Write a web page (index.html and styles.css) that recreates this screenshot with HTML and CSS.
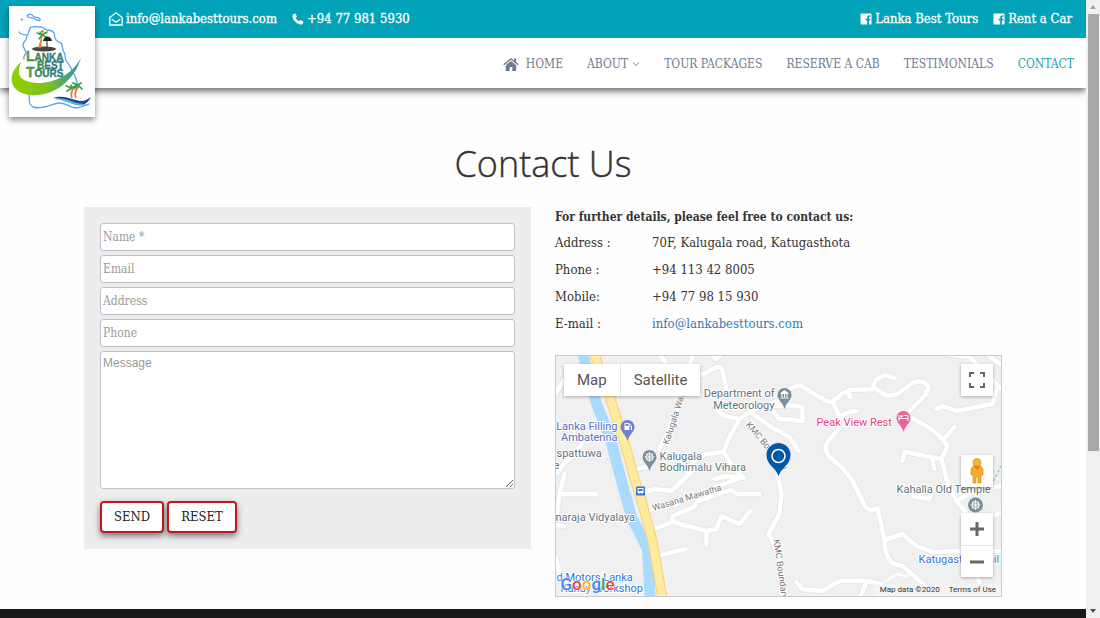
FILE: index.html
```html
<!DOCTYPE html>
<html lang="en">
<head>
<meta charset="utf-8">
<meta name="viewport" content="width=device-width, initial-scale=1">
<title>Contact Us - Lanka Best Tours</title>
<link rel="stylesheet" href="styles.css">
</head>
<body>
<div class="shell">
<div class="page">
  <header class="header">
    <div class="topbar">
      <div class="topbar-group">
        <a href="#"><svg class="icon" viewBox="0 0 14 14" fill="none" stroke="currentColor" stroke-width="1.3" stroke-linejoin="round"><path d="M.8 5.4 7 .8l6.200 4.600V13H.8zM2.800 7.200 7 10.200l4.200-3"/></svg>info@lankabesttours.com</a>
        <a href="#"><svg class="icon icon-phone" viewBox="0 0 12 12" fill="currentColor"><path d="M1.200 1.200 3.200.6 5 3.600 3.700 5c.6 1.300 1.700 2.500 3.100 3.200l1.500-1.300 3.100 1.700-.6 2.100c-.4.700-1.500.9-2.400.700C4.500 10.700 1.300 7.500.6 3.700c-.1-1 0-2 .6-2.500z"/></svg>+94 77 981 5930</a>
      </div>
      <div class="topbar-group">
        <a href="#"><svg class="icon icon-fb" viewBox="0 0 12 12" fill="currentColor"><path fill-rule="evenodd" d="M1 .5h10l.5.5v10l-.5.5H9V7.400h1.300l.2-1.700H9V4.600c0-.5.200-.8.800-.8h.7V2.200c-2.300-.3-3.300.5-3.300 2.100v1.400H5.700v1.700h1.500v4.100H1L.5 11V1z"/></svg>Lanka Best Tours</a>
        <a href="#"><svg class="icon icon-fb" viewBox="0 0 12 12" fill="currentColor"><path fill-rule="evenodd" d="M1 .5h10l.5.5v10l-.5.5H9V7.400h1.300l.2-1.700H9V4.600c0-.5.200-.8.800-.8h.7V2.200c-2.300-.3-3.300.5-3.300 2.100v1.400H5.700v1.700h1.500v4.100H1L.5 11V1z"/></svg>Rent a Car</a>
      </div>
    </div>
    <nav class="nav">
      <a href="#"><svg class="icon-home" viewBox="0 0 16 13" fill="currentColor"><path d="M8 0 .3 6.300l.9 1L8 1.800l6.800 5.500.9-1L13 4V.6h-2v1.800z"/><path d="M8 3 2.800 7.300V13h3.900V9h2.600v4h3.900V7.300z"/></svg>HOME</a>
      <a href="#">ABOUT<svg class="icon-caret" viewBox="0 0 8 6" fill="none" stroke="currentColor" stroke-width="1"><path d="M1 1.500 4 4.500 7 1.500"/></svg></a>
      <a href="#">TOUR PACKAGES</a>
      <a href="#">RESERVE A CAB</a>
      <a href="#">TESTIMONIALS</a>
      <a href="#" class="active">CONTACT</a>
    </nav>
    <a class="logo" href="#" aria-label="Lanka Best Tours">
      <svg viewBox="9 6 86 111" fill="none">
        <defs>
          <linearGradient id="swoosh"><stop offset="0" stop-color="#8fd000"/><stop offset=".5" stop-color="#7fc31c"/><stop offset="1" stop-color="#2b8fb0"/></linearGradient>
          <linearGradient id="word"><stop offset="0" stop-color="#3f8f3c"/><stop offset="1" stop-color="#1f7f95"/></linearGradient>
        </defs>
        <g stroke="#56a5f0" stroke-width="1.300" stroke-linecap="round" stroke-linejoin="round">
          <path d="M19 32c2 3 5 3 8 3 3-1 1-6 4-8 3-1 7 0 10 0s3 3 6 3 5 0 7 3c1 3 0 6 3 8s5 1 5 4c1 3 0 5 2 7 2 4 0 7 3 10s4 7 6 10 3 6 4 10 0 7-2 11M27 36c0 4-4 6-4 9s3 5 3 8c-1 3-3 3-2 6M29 92c1 4-1 8 1 12 3 5 9 4 14 3 6-1 10-4 16-4 7 0 10 5 16 5 5-1 7-1 13-4"/>
          <path d="M27 16c2-3 5-2 6 0s4 0 7 3c1 2-2 2-5 0s-6 0-8-3z"/>
          <path d="M21.500 19.500h.5" stroke-width="2"/>
        </g>
        <ellipse cx="44" cy="49" rx="12" ry="2.500" fill="#444"/>
        <path d="M41 48c-1-5 0-8 1-12M39 48l3-12" stroke="#ee7622" stroke-width="1.300"/>
        <path d="M42 35l-5-2M42 35l-3 4M42 35l5-3M42 35l4 2M42 35l-2-3" stroke="#2fa04e" stroke-width="1.500" stroke-linecap="round"/>
        <circle cx="42.500" cy="31.500" r="1.300" fill="#f05a28"/>
        <path d="M43 41c1-6 8-6 9 0z" fill="#222"/><path d="M47 39v9" stroke="#222"/>
        <path d="M21 62c-4 11-3 17 9 20 17 4 40-4 51-24-8 25-29 39-51 37-21-2-24-20-9-33z" fill="url(#swoosh)"/>
        <g class="logo-word">
          <text x="26" y="61"><tspan class="cap">L</tspan>ANKA</text>
          <text x="37" y="69">BEST</text>
          <text x="26" y="77"><tspan class="cap">T</tspan>OURS</text>
        </g>
        <path d="M72 98c-2-4 0-6 1-10M76 98c-2-5 0-8 3-12" stroke="#f07824" stroke-width="1.700"/>
        <path d="M72 88l-6-2M72 88l-5 3M72 88l5-3M72 88l-1-3M78 85l-5-2M78 85l3-2M78 85l4 4M78 85l-4 4" stroke="#2ca24c" stroke-width="1.700" stroke-linecap="round"/>
        <path d="M53 98c10-4 20 2 28 3 4 0 7-2 10-4-3 6-8 9-13 8-8-1-16-7-25-7z" fill="#21439b"/>
        <path d="M56 99c11-1 20 6 26 5M62 100c10 2 14 6 25 5" stroke="#52b6ed" stroke-width="1.300"/>
      </svg>
    </a>
  </header>

  <main class="main">
    <h1>Contact Us</h1>
    <div class="columns">
      <form class="form">
        <input type="text" aria-label="Name" placeholder="Name *">
        <input type="email" aria-label="Email" placeholder="Email">
        <input type="text" aria-label="Address" placeholder="Address">
        <input type="tel" aria-label="Phone" placeholder="Phone">
        <textarea aria-label="Message" placeholder="Message"></textarea>
        <div class="actions">
          <button type="submit">SEND</button>
          <button type="reset">RESET</button>
        </div>
      </form>
      <section class="info">
        <p class="lead">For further details, please feel free to contact us:</p>
        <dl class="details">
          <dt>Address :</dt><dd>70F, Kalugala road, Katugasthota</dd>
          <dt>Phone :</dt><dd>+94 113 42 8005</dd>
          <dt>Mobile:</dt><dd>+94 77 98 15 930</dd>
          <dt>E-mail :</dt><dd><a href="#">info@lankabesttours.com</a></dd>
        </dl>
        <div class="map">
          <svg class="map-canvas" viewBox="556 357 446 240" preserveAspectRatio="xMidYMid slice" role="img" aria-label="Map of Katugasthota">
            <defs>
              <path id="roads" d="M698 378 717 368Q722 367 723 371L727 390M716 410 725 417 740 420 752 412 785 399M740 420 729 440 724 453 706 455 694 463 686 478M724 453 735 470 741 476M752 414 770 427 790 438 799 452M660 450 675 417 683 397 693 356M660 356 666 363M707 350 716 360 722 356M565 380 557 393M557 475 565 464 575 455 583 444M637 470 652 467M715 480 727 477 745 479M785 392 800 386 827 402 833 403 842 395 850 391 877 390 888 397 898 395 913 384Q924 379 929 388L926 396 908 414M873 389 876 381 885 376 895 379M848 392 851 398M833 403 840 417 850 413 857 412M840 417 839 430 828 443Q824 450 830 458L842 468 852 480 866 508Q871 513 878 509L885 540 886 553 892 564 903 567 925 586M885 541 903 535 917 547 933 553 957 552 1002 552M912 419 927 427 940 437 948 447 942 460 947 480 957 502 970 518M944 440 955 428M942 460 905 453 903 462M932 458 935 470M937 410 943 407 957 412 993 405 998 388M947 355 970 358 980 368 1002 390M987 355 1003 367M770 408 780 420 803 422 803 408 792 406 770 407M778 475 782 495 780 515 769 535 773 542 780 560 782 597M797 583 803 590 822 592 840 582 867 582 882 585M866 585 861 597M913 497 930 500 932 495M957 502 975 492 1002 487M993 518 1002 513M977 575 982 590M560 495 596 495M565 475 560 495 557 520M556 526 565 527M556 558 562 582M645 493 655 490 672 492 694 471M650 511 744 478M653 531 673 523 673 517 695 508 697 503 731 491 738 495 760 495M673 523 707 532 717 530 722 517 740 525 751 512M707 532 707 546M658 557 686 550"/>
              <path id="pin" d="M0 14C-2 7-7 5-7 0a7 7 0 0 1 14 0C7 5 2 7 0 14z"/>
            </defs>
            <path fill="#f1f0f0" d="M500 300h600v400H500z"/>
            <g fill="none" stroke-linejoin="round" stroke-linecap="round">
              <path d="M582 350 597 405 611 440 621 478 632 518 648 550 651 605" stroke="#aadaff" stroke-width="11"/>
              <use href="#roads" stroke="#e3e4e8" stroke-width="6"/>
              <use href="#roads" stroke="#fff" stroke-width="4.500"/>
              <path d="M882 585 898 575 907 578 913 574" stroke="#fff" stroke-width="2"/>
              <path d="M593 350 610 397 626 447 635 480 643 505 653 542 664 605" stroke="#f8d16c" stroke-width="10"/>
              <path d="M593 350 610 397 626 447 635 480 643 505 653 542 664 605" stroke="#ffeb9f" stroke-width="8"/>
              <path d="M994 482 1002 466" stroke="#6ab58d" stroke-dasharray="2 3"/>
            </g>
            <g class="map-text">
              <g class="place">
                <text x="775" y="398" text-anchor="end">Department of</text><text x="775" y="410" text-anchor="end">Meteorology</text>
                <text x="660" y="461">Kalugala</text><text x="660" y="472">Bodhimalu Vihara</text>
                <text x="557" y="458">spattuwa</text><text x="554" y="470">e</text>
                <text x="556" y="522">naraja Vidyalaya</text><text x="897" y="494">Kahalla Old Temple</text>
              </g>
              <g class="shop"><text x="618" y="431" text-anchor="end">Lanka Filling</text><text x="618" y="442" text-anchor="end">Ambatenna</text></g>
              <text class="hotel" x="817" y="427">Peak View Rest</text>
              <g class="transit"><text x="557" y="582">d Motors Lanka</text><text x="561" y="593">Kandy Workshop</text><text x="919" y="564">Katugastota Rail</text></g>
              <g class="street">
                <text transform="translate(669 446) rotate(-72)">Kalugala Watta</text>
                <text transform="translate(746 426) rotate(50)">KMC Boundary</text>
                <text transform="translate(654 512) rotate(-17)">Wasana Mawatha</text>
                <text transform="translate(774 541) rotate(82)">KMC Boundary Rd</text>
              </g>
            </g>
            <g transform="translate(785 396)"><use href="#pin" fill="#78909c"/><path fill="#fff" d="M-4-2 0-5l4 3v1h-8zM-3-1h1v3h-1zM-.5-1h1v3h-1zM2-1h1v3H2zM-4 2.500h8v1h-8z"/></g>
            <g transform="translate(650 458)"><use href="#pin" fill="#78909c"/><g fill="none" stroke="#fff"><circle r="3.500"/><path d="M-5 0H5M0-5V5M-3.500-3.500l7 7M3.500-3.500l-7 7" stroke-width=".8"/></g></g>
            <g transform="translate(628 428)"><use href="#pin" fill="#7080cf"/><path fill="#fff" fill-rule="evenodd" d="M-3-4h5V3h-5zM-2-3v2h3v-2z"/><path d="M2-3l2 2v4" stroke="#fff" fill="none"/></g>
            <g transform="translate(904 419)"><use href="#pin" fill="#ee6196"/><path fill="#fff" d="M-5-3h1v3H4V-2H0v-1h4l1 1v5H4V1h-8v2h-1z"/><circle cx="-2" cy="-1.700" r="1.200" fill="#fff"/></g>
            <g transform="translate(976 506)"><circle r="7.500" fill="#78909c"/><g fill="none" stroke="#fff"><circle r="3.500"/><path d="M-5 0H5M0-5V5M-3.500-3.500l7 7M3.500-3.500l-7 7" stroke-width=".8"/></g></g>
            <g transform="translate(641 492)"><rect x="-4.500" y="-4.500" width="9" height="9" rx="1" fill="#3173e4"/><path fill="#fff" fill-rule="evenodd" d="M-3-3h6v5H2v1H1V2h-2v1h-1V2h-1zM-2-2v2h4v-2z"/></g>
            <path fill="#0058a8" d="M779 477c-3-9-12-11-12-21a12 12 0 0 1 24 0c0 10-9 12-12 21z"/>
            <circle cx="779" cy="457" r="6.500" fill="none" stroke="#fff" stroke-width="1.500"/>
            <text class="brand" x="561" y="591"><tspan fill="#4285f4">G</tspan><tspan fill="#ea4335">o</tspan><tspan fill="#fbbc05">o</tspan><tspan fill="#4285f4">g</tspan><tspan fill="#34a853">l</tspan><tspan fill="#ea4335">e</tspan></text>
          </svg>
          <div class="map-types"><button type="button">Map</button><button type="button">Satellite</button></div>
          <button type="button" class="map-btn fullscreen" aria-label="Toggle fullscreen"><svg viewBox="0 0 16 16" fill="none" stroke="#666" stroke-width="2"><path d="M1 5V1h4M11 1h4v4M15 11v4h-4M5 15H1v-4"/></svg></button>
          <div class="map-side">
            <button type="button" class="map-btn" aria-label="Street View"><svg class="pegman" viewBox="0 0 14 26"><path fill="#f5ae25" stroke="#c98518" stroke-width=".6" d="M3 8h8l2 3v6h-2v8H8v-6H6v6H3v-8H1v-6z"/><circle cx="7" cy="4.500" r="4" fill="#f5b52d" stroke="#c98518" stroke-width=".6"/><path fill="#e77b22" d="M4 8h6l-3 4z"/></svg></button>
            <div class="zoom">
              <button type="button" aria-label="Zoom in"><svg viewBox="0 0 16 16"><path fill="#666" d="M6.500 1h3v5.500H15v3H9.500V15h-3V9.500H1v-3h5.500z"/></svg></button>
              <button type="button" aria-label="Zoom out"><svg viewBox="0 0 16 16"><path fill="#666" d="M1 6.500h14v3H1z"/></svg></button>
            </div>
          </div>
          <div class="map-legal"><span>Map data ©2020</span><a href="#">Terms of Use</a></div>
        </div>
      </section>
    </div>
  </main>
  <footer class="footer"></footer>
</div>
<div class="scrollbar" aria-hidden="true">
  <svg viewBox="0 0 14 14"><path fill="#a3a3a3" d="M4 9h6L7 5z"/></svg>
  <div class="track"><div class="thumb"></div></div>
  <svg viewBox="0 0 14 14"><path fill="#505050" d="M4 5h6L7 9z"/></svg>
</div>
</div>
</body>
</html>
```
FILE: styles.css
```css
* { box-sizing: border-box; }
body {
  margin: 0;
  font-family: "Roboto Slab", "DejaVu Serif Condensed", "DejaVu Serif", serif;
  font-size: 13px;
  line-height: 20px;
  color: #333;
  background: #fefefe;
}
a { color: inherit; text-decoration: none; }
button, input { font: inherit; }
svg { display: block; }

.shell { display: flex; height: 100vh; overflow: hidden; }
.page { flex: 1; min-width: 0; display: flex; flex-direction: column; overflow: hidden; }

.header { position: relative; background: #fff; box-shadow: 0 3px 7px rgba(0, 0, 0, .6); }
.topbar {
  display: flex;
  justify-content: space-between;
  align-items: center;
  height: 38px;
  padding: 0 14px 0 109px;
  background: #02a3b8;
  color: #fff;
  -webkit-text-stroke: .3px currentColor;
}
.topbar-group { display: flex; gap: 15px; }
.topbar a { display: flex; align-items: center; gap: 3px; white-space: nowrap; }
.icon { width: 14px; height: 14px; }
.icon-phone, .icon-fb { width: 12px; height: 12px; }
.nav {
  display: flex;
  justify-content: flex-end;
  align-items: center;
  gap: 24px;
  height: 50px;
  padding: 2px 12px 0 0;
  font-size: 12px;
  color: #6f7b91;
}
.nav a { display: flex; align-items: center; white-space: nowrap; }
.nav .active { color: #10a5b8; }
.icon-home { width: 16px; height: 13px; margin-right: 7px; }
.icon-caret { width: 8px; height: 6px; margin-left: 4px; }
.logo {
  position: absolute;
  top: 6px;
  left: 9px;
  width: 86px;
  background: #fff;
  box-shadow: 0 3px 6px rgba(0, 0, 0, .45);
}
.logo-word {
  font: bold 10px "Liberation Sans", sans-serif;
  fill: url(#word);
  stroke: #2a6f64;
  stroke-width: .3px;
}
.logo-word .cap { font-size: 14px; fill: #5aa838; }

.main { padding: 0 84px 12px; }
h1 {
  margin: 52px 0 19px;
  font: 300 36px/48px "Open Sans", sans-serif;
  text-align: center;
  color: #333;
  -webkit-text-stroke: .4px currentColor;
}
.columns { display: grid; grid-template-columns: 1fr 1fr; gap: 24px; align-items: start; }
.form {
  display: flex;
  flex-direction: column;
  gap: 4px;
  padding: 16px;
  background: #ededed;
}
.form input, .form textarea {
  width: 100%;
  height: 28px;
  margin: 0;
  padding: 2px;
  border: 1px solid #bfc0cd;
  border-radius: 3px;
  background: #fff;
  font-size: 12px;
}
.form textarea {
  height: 138px;
  font: 12px/18px "Liberation Sans", sans-serif;
}
::placeholder { color: #999; opacity: 1; }
.actions { display: flex; gap: 3px; margin-top: 8px; }
.actions button {
  height: 32px;
  padding: 0 12px;
  border: 2px solid #c4161c;
  border-radius: 4px;
  background: #fff;
  color: #222;
  box-shadow: 0 3px 6px rgba(0, 0, 0, .5);
}

.lead { margin: 0 0 6px; font-size: 12px; font-weight: bold; }
.details { display: grid; grid-template-columns: 97px 1fr; row-gap: 7px; margin: 0; }
.details dd { margin: 0; }
.details a { color: #337ab7; }

.map {
  position: relative;
  height: 242px;
  margin-top: 21px;
  border: 1px solid #ccc;
  overflow: hidden;
  font-family: Roboto, sans-serif;
}
.map-canvas { width: 100%; height: 100%; }
.map-text text { font-family: Roboto, sans-serif; font-size: 11px; paint-order: stroke; stroke: #fff; stroke-width: 2px; }
.place { fill: #607580; }
.shop { fill: #5b6bc5; }
.hotel { fill: #e93e7e; }
.transit { fill: #3576dc; }
.map-text .street text { font-size: 9px; fill: #777; }
.brand { font: 500 17px Roboto, sans-serif; paint-order: stroke; stroke: #fff; stroke-width: 1px; }
.map button { border: 0; padding: 0; background: #fff; color: #565656; }
.map-types {
  position: absolute;
  top: 8px;
  left: 8px;
  display: flex;
  box-shadow: 0 1px 3px rgba(0, 0, 0, .3);
}
.map .map-types button { height: 32px; padding: 0 13px; font-size: 15px; }
.map .map-types button + button { border-left: 1px solid #e6e6e6; }
.map-btn, .zoom button { display: grid; place-items: center; width: 32px; height: 32px; }
.map-btn, .zoom { box-shadow: 0 1px 3px rgba(0, 0, 0, .3); }
.map-btn svg, .zoom svg { width: 16px; height: 16px; }
.map-btn .pegman { width: 14px; height: 26px; }
.fullscreen { position: absolute; top: 8px; right: 8px; }
.map-side { position: absolute; right: 8px; bottom: 19px; display: grid; gap: 26px; }
.zoom { background: #fff; }
.map .zoom button + button { border-top: 1px solid #e6e6e6; }
.map-legal {
  position: absolute;
  right: 0;
  bottom: 0;
  display: flex;
  gap: 9px;
  padding: 0 5px;
  font-size: 8px;
  line-height: 12px;
  color: #333;
  background: rgba(245, 245, 245, .7);
}

.footer { flex: 1; background: #191919; }

.scrollbar { display: flex; flex-direction: column; width: 14px; background: #f1f1f1; }
.track { flex: 1; padding: 0 1px 0 2px; }
.thumb { height: 74%; background: #a8a8a8; }
```
